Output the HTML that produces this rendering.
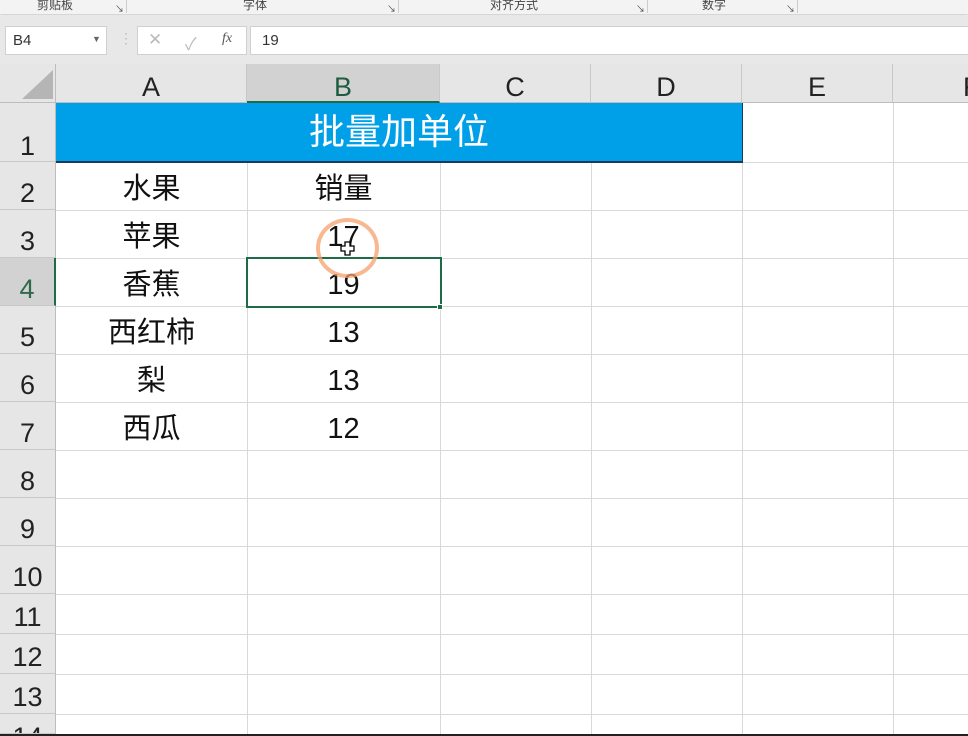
<!DOCTYPE html>
<html><head><meta charset="utf-8"><style>
*{margin:0;padding:0;box-sizing:border-box}
body{width:968px;height:736px;overflow:hidden;background:#fff;font-family:"Liberation Sans","Noto Sans CJK SC",sans-serif;position:relative}
.a{position:absolute}
.rib{left:0;top:0;width:968px;height:15px;background:#f3f3f3;border-bottom:1px solid #d6d6d6;box-shadow:0 1px 3px rgba(0,0,0,.15)}
.rl{top:-4px;font-size:12px;color:#444}
.fbar{left:0;top:16px;width:968px;height:48px;background:#e8e8e8}
.box{background:#fff;border:1px solid #d0d0d0}
.hdr{left:0;top:64px;width:968px;height:39px;background:#e6e6e6;border-bottom:1px solid #bdbdbd}
.ch{top:64px;height:39px;font-size:27px;text-align:center;line-height:46px;color:#222;border-right:1px solid #c8c8c8}
.rh{left:0;width:56px;background:#e6e6e6;border-bottom:1px solid #c8c8c8;border-right:1px solid #bdbdbd;font-size:27px;color:#222;text-align:center;overflow:hidden}
.hl{background:#d2d2d2}
.vl{top:103px;width:1px;height:633px;background:#d9d9d9}
.hlz{left:56px;width:912px;height:1px;background:#d9d9d9}
.t{font-size:29px;color:#111;text-align:center}
</style></head><body>
<div class="a rib">
<span class="a rl" style="left:37px">剪贴板</span><span class="a rl" style="left:115px;font-size:9px;top:2px">↘</span>
<div class="a" style="left:126px;top:0;width:1px;height:13px;background:#ccc"></div>
<span class="a rl" style="left:243px">字体</span><span class="a rl" style="left:387px;font-size:9px;top:2px">↘</span>
<div class="a" style="left:398px;top:0;width:1px;height:13px;background:#ccc"></div>
<span class="a rl" style="left:490px">对齐方式</span><span class="a rl" style="left:636px;font-size:9px;top:2px">↘</span>
<div class="a" style="left:647px;top:0;width:1px;height:13px;background:#ccc"></div>
<span class="a rl" style="left:702px">数字</span><span class="a rl" style="left:786px;font-size:9px;top:2px">↘</span>
<div class="a" style="left:797px;top:0;width:1px;height:13px;background:#ccc"></div>
</div>
<div class="a fbar"></div>
<div class="a box" style="left:5px;top:26px;width:102px;height:29px"><span class="a" style="left:7px;top:5px;font-size:15px;color:#333">B4</span><span class="a" style="left:86px;top:7px;font-size:9px;color:#666">▼</span></div>
<span class="a" style="left:119px;top:30px;font-size:14px;color:#bbb">⋮</span>
<div class="a box" style="left:137px;top:26px;width:110px;height:29px"><span class="a" style="left:10px;top:3px;font-size:17px;color:#bbb">✕</span><span class="a" style="left:47px;top:3px;font-size:17px;color:#bbb">✓</span><span class="a" style="left:84px;top:4px;font-size:14px;color:#555;font-style:italic;font-family:'Liberation Serif',serif">fx</span></div>
<div class="a box" style="left:250px;top:26px;width:730px;height:29px"><span class="a" style="left:11px;top:5px;font-size:15px;color:#333">19</span></div>
<div class="a hdr"></div>
<svg class="a" style="left:20px;top:70px" width="34" height="30"><polygon points="33,0 33,29 2,29" fill="#b5b5b5"/></svg>
<div class="a" style="left:55px;top:64px;width:1px;height:672px;background:#bdbdbd"></div>
<div class="a ch" style="left:56px;width:191px">A</div>
<div class="a ch hl" style="left:247px;width:193px;color:#1e5c3f;border-bottom:2px solid #1e6b48">B</div>
<div class="a ch" style="left:440px;width:151px">C</div>
<div class="a ch" style="left:591px;width:151px">D</div>
<div class="a ch" style="left:742px;width:151px">E</div>
<div class="a ch" style="left:893px;width:100px;text-align:left;padding-left:70px">F</div>
<div class="a rh" style="top:103px;height:59px;line-height:86px">1</div>
<div class="a rh" style="top:162px;height:48px;line-height:62px">2</div>
<div class="a rh" style="top:210px;height:48px;line-height:62px">3</div>
<div class="a rh hl" style="top:258px;height:48px;line-height:62px;color:#2f6a4f;border-right:2px solid #1e6b48">4</div>
<div class="a rh" style="top:306px;height:48px;line-height:62px">5</div>
<div class="a rh" style="top:354px;height:48px;line-height:62px">6</div>
<div class="a rh" style="top:402px;height:48px;line-height:62px">7</div>
<div class="a rh" style="top:450px;height:48px;line-height:62px">8</div>
<div class="a rh" style="top:498px;height:48px;line-height:62px">9</div>
<div class="a rh" style="top:546px;height:48px;line-height:62px">10</div>
<div class="a rh" style="top:594px;height:40px;line-height:46px">11</div>
<div class="a rh" style="top:634px;height:40px;line-height:46px">12</div>
<div class="a rh" style="top:674px;height:40px;line-height:46px">13</div>
<div class="a rh" style="top:714px;height:20px;line-height:46px">14</div>
<div class="a vl" style="left:247px"></div><div class="a vl" style="left:440px"></div><div class="a vl" style="left:591px"></div><div class="a vl" style="left:742px"></div><div class="a vl" style="left:893px"></div>
<div class="a hlz" style="top:162px"></div><div class="a hlz" style="top:210px"></div><div class="a hlz" style="top:258px"></div><div class="a hlz" style="top:306px"></div><div class="a hlz" style="top:354px"></div><div class="a hlz" style="top:402px"></div><div class="a hlz" style="top:450px"></div><div class="a hlz" style="top:498px"></div><div class="a hlz" style="top:546px"></div><div class="a hlz" style="top:594px"></div><div class="a hlz" style="top:634px"></div><div class="a hlz" style="top:674px"></div><div class="a hlz" style="top:714px"></div>
<div class="a" style="left:0;top:734px;width:968px;height:2px;background:#222"></div>
<div class="a" style="left:56px;top:103px;width:687px;height:60px;background:#00a0e9;border-bottom:2px solid #1a3a5a;border-right:1px solid #1a3a5a;color:#fff;font-size:36px;text-align:center;line-height:58px">批量加单位</div>
<div class="a t" style="left:56px;width:191px;top:168px;line-height:42px">水果</div>
<div class="a t" style="left:247px;width:193px;top:168px;line-height:42px">销量</div>
<div class="a t" style="left:56px;width:191px;top:216px;line-height:42px">苹果</div>
<div class="a t" style="left:247px;width:193px;top:216px;line-height:42px">17</div>
<div class="a t" style="left:56px;width:191px;top:264px;line-height:42px">香蕉</div>
<div class="a t" style="left:247px;width:193px;top:264px;line-height:42px">19</div>
<div class="a t" style="left:56px;width:191px;top:312px;line-height:42px">西红柿</div>
<div class="a t" style="left:247px;width:193px;top:312px;line-height:42px">13</div>
<div class="a t" style="left:56px;width:191px;top:360px;line-height:42px">梨</div>
<div class="a t" style="left:247px;width:193px;top:360px;line-height:42px">13</div>
<div class="a t" style="left:56px;width:191px;top:408px;line-height:42px">西瓜</div>
<div class="a t" style="left:247px;width:193px;top:408px;line-height:42px">12</div>
<div class="a" style="left:246px;top:257px;width:196px;height:51px;border:2px solid #1e6b48"></div>
<div class="a" style="left:437px;top:304px;width:6px;height:6px;background:#1e6b48;border:1px solid #fff"></div>
<div class="a" style="left:316px;top:218px;width:63px;height:60px;border:4px solid rgba(245,160,110,.75);border-radius:50%"></div>
<svg class="a" style="left:340px;top:241px" width="16" height="16"><path d="M5 1h5v4h4v5h-4v4H5v-4H1V5h4z" fill="#fff" stroke="#000" stroke-width="1.3"/></svg>
</body></html>
